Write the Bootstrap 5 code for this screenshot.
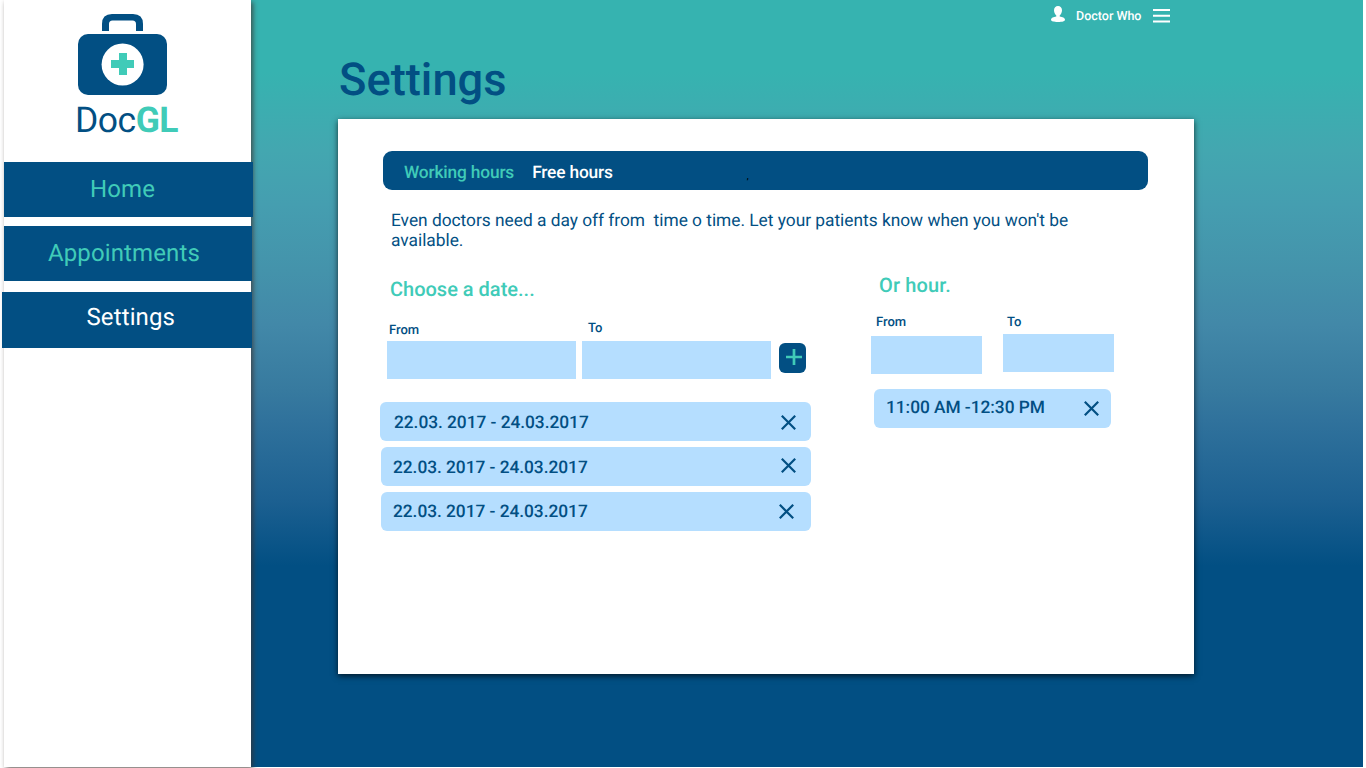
<!DOCTYPE html>
<html lang="en">
<head>
<meta charset="utf-8">
<meta name="viewport" content="width=device-width, initial-scale=1">
<title>DocGL – Settings</title>
<link href="https://cdn.jsdelivr.net/npm/bootstrap@5.3.0/dist/css/bootstrap.min.css" rel="stylesheet">
<style>
:root { --navy: #024f83; --mint: #40cbb8; --sky: #b5deff; }
body { font-family: Roboto, sans-serif; color: var(--navy); width: 1366px; height: 768px; overflow: hidden; background: #fff; text-rendering: geometricPrecision; }
svg { display: block; flex: none; }
.text-mint { color: var(--mint) !important; }
.bg-navy { background: var(--navy); }

.app { height: 767px; width: 1363px; }
.sidebar { width: 247px; margin-left: 4px; background: #fff; box-shadow: 2px 2px 5px rgba(60,50,45,.75); z-index: 1; }
.backdrop { background: linear-gradient(#36b3b0 0, #36b3b0 72px, #43a7b0 150px, #459eb0 205px, #4493ab 270px, #4288a8 325px, #377a9f 390px, #30729c 420px, #1c6091 500px, #024f83 566px); }

.logo { padding: 14px 0 0 74px; }
.logo-name { font-size: 35.5px; line-height: 40px; margin: 5px 0 0 -3px; letter-spacing: -.5px; }
.menu { margin-top: 22px; }
.menu a { font-size: 24px; height: 55px; letter-spacing: .12px; background: var(--navy); color: var(--mint); text-decoration: none; }
.menu .m-home { width: 249px; padding-left: 86px; padding-bottom: 1px; }
.menu .m-appt { width: 248px; padding-left: 44px; margin-top: 9px; padding-bottom: 1px; }
.menu .m-set { width: 250px; height: 56px; margin: 11px 0 0 -2px; padding: 0 0 6px 84.500px; color: #fff; }

.topbar { height: 32px; padding-left: 800px; color: #fff; font-size: 12.500px; font-weight: 500; }
.user-name { width: 66px; margin: 3px 11px 0; white-space: nowrap; }
.page-title { font-size: 45.300px; font-weight: 500; line-height: 52px; margin: 23px 0 12px 88px; }
.panel { width: 856px; height: 555px; margin-left: 87px; padding: 32px 42px 0 45px; background: #fff; box-shadow: 0 2px 6px rgba(0,0,0,.7); }
.tabs { width: 765px; height: 39px; border-radius: 9px; padding: 6px 0 0 21px; font-size: 17.330px; font-weight: 500; letter-spacing: -.17px; }
.tabs a { color: #fff; text-decoration: none; }
.tabs .free { margin-left: 18px; }
.tick { color: #000; font-size: 9px; margin-left: 134px; padding-top: 6px; line-height: 12px; }
.intro { font-size: 17.330px; line-height: 20px; margin: 21px 0 -1px 8px; width: 710px; letter-spacing: -.015px; white-space: pre-line; }

.section-title { font-size: 20px; font-weight: 500; line-height: 24px; margin: 0; }
.field span { display: block; font-size: 13px; font-weight: 500; line-height: 16px; position: relative; top: 1px; }
.field i { display: block; height: 38px; background: var(--sky); }
.add { width: 27px; height: 30px; border-radius: 6px; margin: 22px 0 0 8px; }
.slot { height: 39px; border-radius: 6px; background: var(--sky); font-size: 17.330px; font-weight: 500; letter-spacing: -.04px; }
.slot span { line-height: 43px; white-space: nowrap; }
.slot svg { margin-left: auto; }

.dates { width: 434px; margin-left: -3px; }
.dates .field i { width: 189px; }
.d-title { margin: 27px 0 0 10px; }
.d-fields { margin: 20px 0 0 7px; height: 58px; }
.l-from { padding: 1px 0 0 2px; margin-bottom: 3px; }
.f-to { margin-left: 6px; margin-top: -1px; }
.f-to span { padding-left: 6px; margin-bottom: 5px; }
.s1 { width: 431px; padding: 0 15px 0 14px; margin-top: 23px; }
.s1 svg { margin-top: 13px; }
.s2, .s3 { width: 430px; margin: 6px 0 0 1px; padding: 0 15px 0 12px; }
.s2 svg { margin-top: 11px; }
.s3 { padding-right: 17px; }
.s3 span { margin-top: -1px; }
.s3 svg { margin-top: 12px; }

.hours { width: 243px; margin-left: 57px; }
.hours .field i { width: 111px; }
.h-title { margin: 23px 0 0 8px; letter-spacing: .15px; }
.h-fields { margin-top: 17px; }
.hf span { padding-left: 5px; margin-bottom: 6px; }
.ht { margin-left: 21px; }
.ht span { padding-left: 4px; margin-bottom: 4px; }
.s4 { width: 237px; margin: 15px 0 0 3px; padding: 0 12px; }
.s4 span { margin-top: -2px; }
.s4 svg { margin-top: 12px; }
</style>
</head>
<body>
<div class="app d-flex">
  <aside class="sidebar position-relative flex-shrink-0">
    <div class="logo">
      <svg width="89" height="81" viewBox="0 0 89 81">
        <path d="M24 17V10Q24 0 34 0H55Q65 0 65 10V17H58V10Q58 6.500 54.500 6.500H34.500Q31 6.500 31 10V17Z" fill="#024f83"/>
        <rect y="20" width="89" height="61" rx="10" fill="#024f83"/>
        <circle cx="44.600" cy="50.500" r="21" fill="#fff"/>
        <path d="M41 39h8v7h7v8h-7v7h-8v-7h-8v-8h8z" fill="#40cbb8"/>
      </svg>
      <div class="logo-name">Doc<b class="text-mint">GL</b></div>
    </div>
    <nav class="menu">
      <a class="m-home d-flex align-items-center" href="#">Home</a>
      <a class="m-appt d-flex align-items-center" href="#">Appointments</a>
      <a class="m-set d-flex align-items-center" href="#">Settings</a>
    </nav>
  </aside>
  <main class="backdrop flex-grow-1">
    <header class="topbar d-flex align-items-center">
      <svg width="14" height="16" viewBox="0 0 14 16" style="margin-top:-4px"><path d="M7 0C9.400 0 11 1.800 11 4.200C11 6.400 10 8.500 8.700 9.400V10.500C11.500 11 14 11.700 14 13.600C14 15.500 11.500 16 7 16S0 15.500 0 13.600C0 11.700 2.500 11 5.300 10.500V9.400C4 8.500 3 6.400 3 4.200C3 1.800 4.600 0 7 0Z" fill="#fff"/></svg>
      <span class="user-name">Doctor Who</span>
      <svg width="17" height="14" viewBox="0 0 17 14"><path d="M0 1H17M0 6.700H17M0 12.500H17" stroke="#fff" stroke-width="1.900"/></svg>
    </header>
    <h1 class="page-title">Settings</h1>
    <section class="panel">
      <nav class="tabs bg-navy d-flex align-items-center">
        <a class="text-mint" href="#">Working hours</a>
        <a class="free" href="#">Free hours</a>
        <span class="tick">,</span>
      </nav>
      <p class="intro">Even doctors need a day off from &nbsp;time o time. Let your patients know when you won't be available.</p>
      <div class="d-flex">
        <div class="dates">
          <h2 class="section-title d-title text-mint">Choose a date...</h2>
          <div class="d-flex d-fields">
            <label class="field"><span class="l-from">From</span><i></i></label>
            <label class="field f-to"><span>To</span><i></i></label>
            <button class="add bg-navy btn border-0 p-0 d-flex" type="button" aria-label="Add"><svg width="27" height="30" viewBox="0 0 27 30"><path d="M15 6V22M7 14H23" stroke="#40cbb8" stroke-width="2.700"/></svg></button>
          </div>
          <div class="slot s1 d-flex"><span>22.03. 2017 - 24.03.2017</span><svg width="15" height="15" viewBox="0 0 15 15"><path d="M.8.8 14.200 14.200M14.200.8.8 14.200" stroke="#024f83" stroke-width="2.200"/></svg></div>
          <div class="slot s2 d-flex"><span>22.03. 2017 - 24.03.2017</span><svg width="15" height="15" viewBox="0 0 15 15"><path d="M.8.8 14.200 14.200M14.200.8.8 14.200" stroke="#024f83" stroke-width="2.200"/></svg></div>
          <div class="slot s3 d-flex"><span>22.03. 2017 - 24.03.2017</span><svg width="15" height="15" viewBox="0 0 15 15"><path d="M.8.8 14.200 14.200M14.200.8.8 14.200" stroke="#024f83" stroke-width="2.200"/></svg></div>
        </div>
        <div class="hours">
          <h2 class="section-title h-title text-mint">Or hour.</h2>
          <div class="d-flex h-fields">
            <label class="field hf"><span>From</span><i></i></label>
            <label class="field ht"><span>To</span><i></i></label>
          </div>
          <div class="slot s4 d-flex"><span>11:00 AM -12:30 PM</span><svg width="15" height="15" viewBox="0 0 15 15"><path d="M.8.8 14.200 14.200M14.200.8.8 14.200" stroke="#024f83" stroke-width="2.200"/></svg></div>
        </div>
      </div>
    </section>
  </main>
</div>
<script src="https://cdn.jsdelivr.net/npm/bootstrap@5.3.0/dist/js/bootstrap.bundle.min.js"></script>
</body>
</html>
